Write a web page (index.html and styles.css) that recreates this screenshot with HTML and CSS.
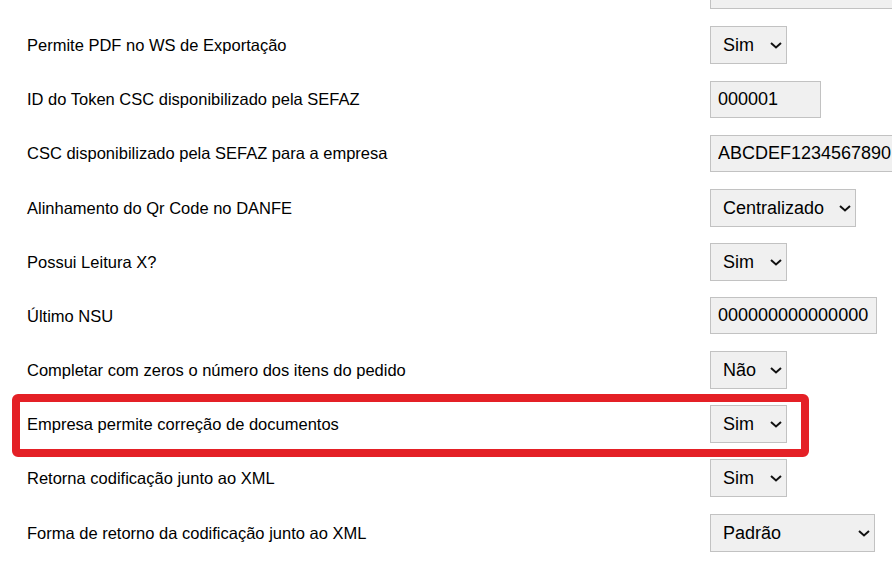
FILE: index.html
```html
<!DOCTYPE html>
<html lang="pt-BR">
<head>
<meta charset="utf-8">
<title>Configurações da empresa</title>
<link rel="stylesheet" href="styles.css">
</head>
<body>
<div class="settings">
  <div class="row">
    <label class="label">Enviar os XMLs do documento fiscal por e-mail</label>
    <div class="control"><input class="field w-full" type="text" value=""></div>
  </div>
  <div class="row">
    <label class="label">Permite PDF no WS de Exportação</label>
    <div class="control">
      <div class="select w-sim">
        <select><option>Sim</option><option>Não</option></select>
        <svg class="chev" width="12" height="7" viewBox="0 0 12 7"><polyline points="1,1 6,5.5 11,1" fill="none" stroke="#111" stroke-width="2"/></svg>
      </div>
    </div>
  </div>
  <div class="row">
    <label class="label">ID do Token CSC disponibilizado pela SEFAZ</label>
    <div class="control"><input class="field w-id" type="text" value="000001"></div>
  </div>
  <div class="row">
    <label class="label">CSC disponibilizado pela SEFAZ para a empresa</label>
    <div class="control"><input class="field w-full" type="text" value="ABCDEF1234567890"></div>
  </div>
  <div class="row">
    <label class="label">Alinhamento do Qr Code no DANFE</label>
    <div class="control">
      <div class="select w-central">
        <select><option>Centralizado</option><option>Esquerda</option><option>Direita</option></select>
        <svg class="chev" width="12" height="7" viewBox="0 0 12 7"><polyline points="1,1 6,5.5 11,1" fill="none" stroke="#111" stroke-width="2"/></svg>
      </div>
    </div>
  </div>
  <div class="row">
    <label class="label">Possui Leitura X?</label>
    <div class="control">
      <div class="select w-sim">
        <select><option>Sim</option><option>Não</option></select>
        <svg class="chev" width="12" height="7" viewBox="0 0 12 7"><polyline points="1,1 6,5.5 11,1" fill="none" stroke="#111" stroke-width="2"/></svg>
      </div>
    </div>
  </div>
  <div class="row">
    <label class="label">Último NSU</label>
    <div class="control"><input class="field w-nsu" type="text" value="000000000000000"></div>
  </div>
  <div class="row">
    <label class="label">Completar com zeros o número dos itens do pedido</label>
    <div class="control">
      <div class="select w-sim">
        <select><option>Não</option><option>Sim</option></select>
        <svg class="chev" width="12" height="7" viewBox="0 0 12 7"><polyline points="1,1 6,5.5 11,1" fill="none" stroke="#111" stroke-width="2"/></svg>
      </div>
    </div>
  </div>
  <div class="row highlight">
    <label class="label">Empresa permite correção de documentos</label>
    <div class="control">
      <div class="select w-sim">
        <select><option>Sim</option><option>Não</option></select>
        <svg class="chev" width="12" height="7" viewBox="0 0 12 7"><polyline points="1,1 6,5.5 11,1" fill="none" stroke="#111" stroke-width="2"/></svg>
      </div>
    </div>
  </div>
  <div class="row">
    <label class="label">Retorna codificação junto ao XML</label>
    <div class="control">
      <div class="select w-sim">
        <select><option>Sim</option><option>Não</option></select>
        <svg class="chev" width="12" height="7" viewBox="0 0 12 7"><polyline points="1,1 6,5.5 11,1" fill="none" stroke="#111" stroke-width="2"/></svg>
      </div>
    </div>
  </div>
  <div class="row">
    <label class="label">Forma de retorno da codificação junto ao XML</label>
    <div class="control">
      <div class="select w-padrao">
        <select><option>Padrão</option><option>Base64</option></select>
        <svg class="chev" width="12" height="7" viewBox="0 0 12 7"><polyline points="1,1 6,5.5 11,1" fill="none" stroke="#111" stroke-width="2"/></svg>
      </div>
    </div>
  </div>
</div>
</body>
</html>
```

FILE: styles.css
```css
html, body {
  margin: 0;
  padding: 0;
  background: #ffffff;
  overflow: hidden;
}

body {
  font-family: "Liberation Sans", Arial, sans-serif;
  color: #000000;
}

.settings {
  margin-top: -36.3px;
  display: flex;
  flex-direction: column;
}

.row {
  position: relative;
  height: 54.2px;
  display: grid;
  grid-template-columns: 683px 1fr;
  align-items: center;
  padding-left: 27px;
}

.label {
  font-size: 16.5px;
  padding-top: 1px;
  white-space: nowrap;
}

.control {
  display: flex;
  align-items: center;
  white-space: nowrap;
}

.field {
  box-sizing: border-box;
  height: 37px;
  margin: 0;
  padding: 0 0 0 7px;
  border: 1px solid #c2c2c2;
  border-radius: 0;
  background: #f0f0f0;
  font-family: "Liberation Sans", Arial, sans-serif;
  font-size: 18px;
  color: #000000;
  outline: none;
  flex-shrink: 0;
}

.select {
  position: relative;
  flex-shrink: 0;
  height: 38px;
}

.select select {
  appearance: none;
  -webkit-appearance: none;
  box-sizing: border-box;
  width: 100%;
  height: 100%;
  margin: 0;
  padding: 0 0 0 12px;
  border: 1px solid #c2c2c2;
  border-radius: 0;
  background: #f0f0f0;
  font-family: "Liberation Sans", Arial, sans-serif;
  font-size: 18px;
  color: #000000;
  outline: none;
}

.chev {
  position: absolute;
  right: 5px;
  top: 16px;
  pointer-events: none;
}

.w-sim { width: 77px; }
.w-id { width: 111px; }
.w-full { width: 200px; }
.w-central { width: 146px; }
.w-nsu { width: 167px; }
.w-padrao { width: 165px; }

.highlight::after {
  content: "";
  position: absolute;
  left: 12px;
  top: -3.3px;
  width: 797px;
  height: 63px;
  box-sizing: border-box;
  border: 8px solid #e42026;
  border-radius: 6px;
  pointer-events: none;
}
```
